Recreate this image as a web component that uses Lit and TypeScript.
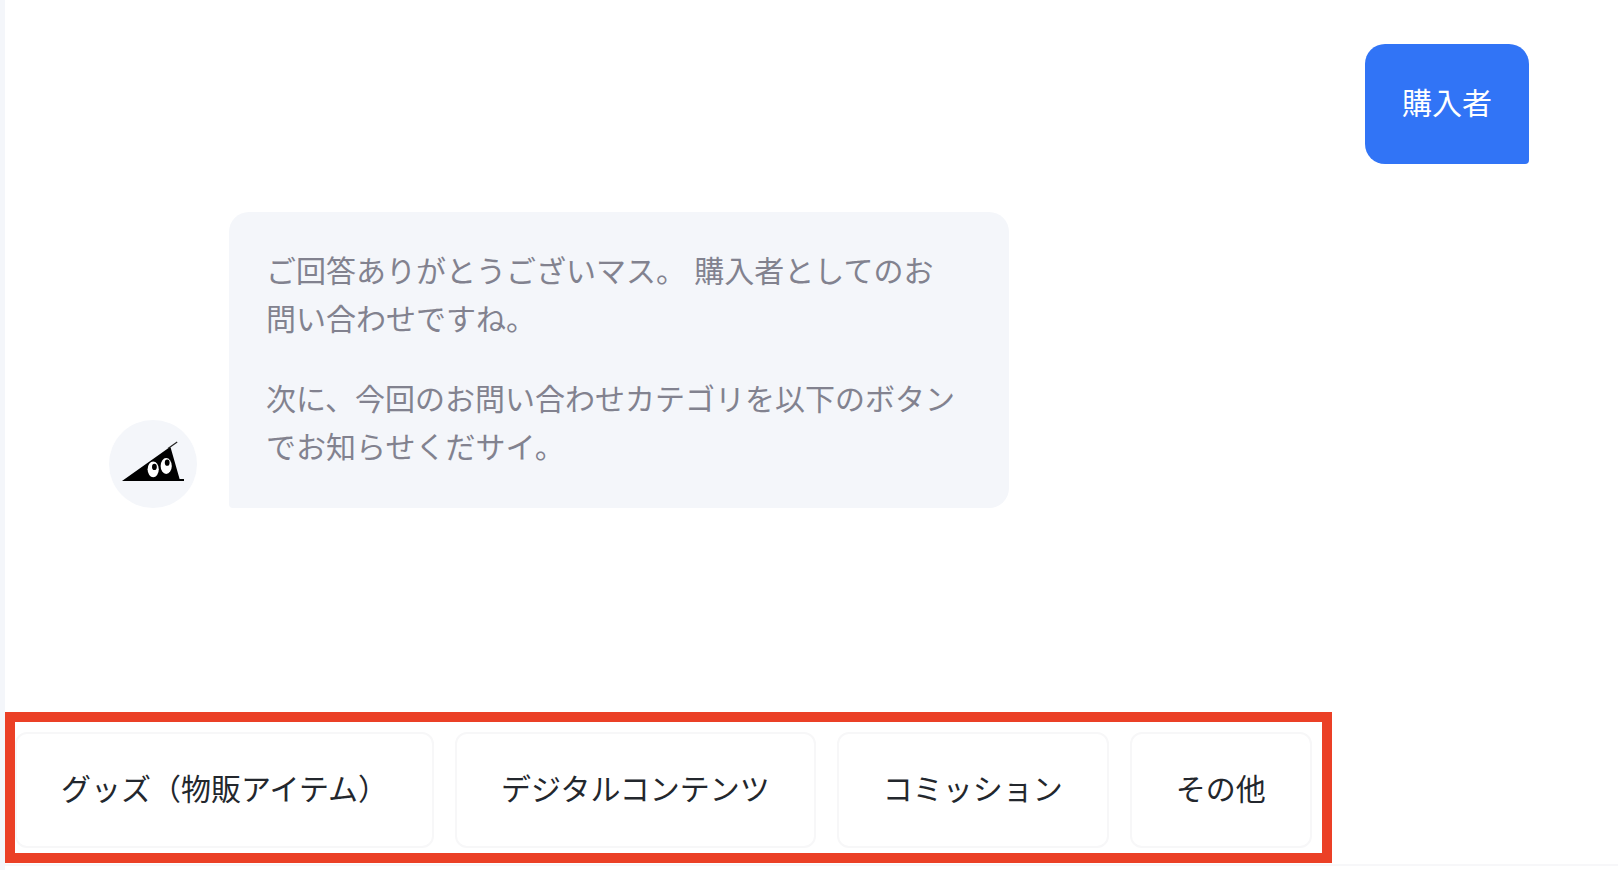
import { LitElement, html, css, svg } from "lit";
import { customElement, property, state } from "lit/decorators.js";

const mascot = svg`
  <path d="M1 40 L48.6 6.2 L49.6 6.4 L58.6 38 L63 38 L63 40 Z" fill="#000"/>
  <path d="M47 7.4 L56.2 1" stroke="#222" stroke-width="1.2" fill="none"/>
  <ellipse cx="32.2" cy="28.3" rx="5.6" ry="7.9" fill="#fff"/>
  <ellipse cx="45.2" cy="25" rx="5.6" ry="7.9" fill="#fff"/>
  <ellipse cx="33.4" cy="25.9" rx="2.4" ry="3.1" fill="#000"/>
  <ellipse cx="46.2" cy="21.7" rx="2.4" ry="3.1" fill="#000"/>`;

@customElement("chat-bubble")
class ChatBubble extends LitElement {
  @property() from: "user" | "bot" = "bot";

  static styles = css`
    :host { display: block; }
    .row { display: flex; align-items: flex-end; gap: 32px; }
    .user { justify-content: flex-end; }
    .avatar {
      flex: none;
      display: grid;
      place-items: center;
      width: 88px;
      height: 88px;
      border-radius: 50%;
      background: #f4f6fa;
    }
    .bubble {
      box-sizing: border-box;
      max-width: 780px;
      padding: 36px 37px;
      border-radius: 20px 20px 20px 4px;
      background: #f4f6fa;
      color: #82828f;
    }
    .user .bubble {
      border-radius: 20px 20px 4px 20px;
      background: #3174f6;
      color: #fff;
    }
  `;

  render() {
    return html`<div class="row ${this.from}">
      ${this.from === "bot"
        ? html`<div class="avatar">
            <svg width="64" height="46" viewBox="0 0 64 46" aria-hidden="true">${mascot}</svg>
          </div>`
        : null}
      <div class="bubble"><slot></slot></div>
    </div>`;
  }
}

@customElement("app-root")
class AppRoot extends LitElement {
  @state() private choices = ["グッズ（物販アイテム）", "デジタルコンテンツ", "コミッション", "その他"];

  static styles = css`
    :host {
      display: flex;
      flex-direction: column;
      box-sizing: border-box;
      min-height: 100vh;
      border-left: 5px solid #f4f6fa;
      background: #fff;
      font: 30px/48px "Liberation Sans", "Noto Sans CJK JP", sans-serif;
    }
    .log {
      flex: 1;
      display: flex;
      flex-direction: column;
      gap: 48px;
      padding: 44px 89px 48px 104px;
    }
    p { margin: 0; }
    p + p { margin-top: 32px; }
    .replies {
      align-self: flex-start;
      display: flex;
      flex-wrap: wrap;
      gap: 21px;
      padding: 10px 10px 5px 0;
      border: 10px solid #eb4026;
    }
    .choice {
      padding: 32px 44px;
      border: 2px solid #f7f7f8;
      border-radius: 12px;
      background: #fff;
      color: #23272d;
      font: inherit;
      cursor: pointer;
    }
    .footer {
      height: 4px;
      margin-top: 1px;
      border-top: 2px solid #f7f7f9;
    }
  `;

  render() {
    return html`
      <main class="log">
        <chat-bubble from="user"><p>購入者</p></chat-bubble>
        <chat-bubble from="bot">
          <p>ご回答ありがとうございマス。 購入者としてのお<br />問い合わせですね。</p>
          <p>次に、今回のお問い合わせカテゴリを以下のボタンでお知らせくだサイ。</p>
        </chat-bubble>
      </main>
      <div class="replies">
        ${this.choices.map((c) => html`<button class="choice" type="button">${c}</button>`)}
      </div>
      <div class="footer"></div>
    `;
  }
}
